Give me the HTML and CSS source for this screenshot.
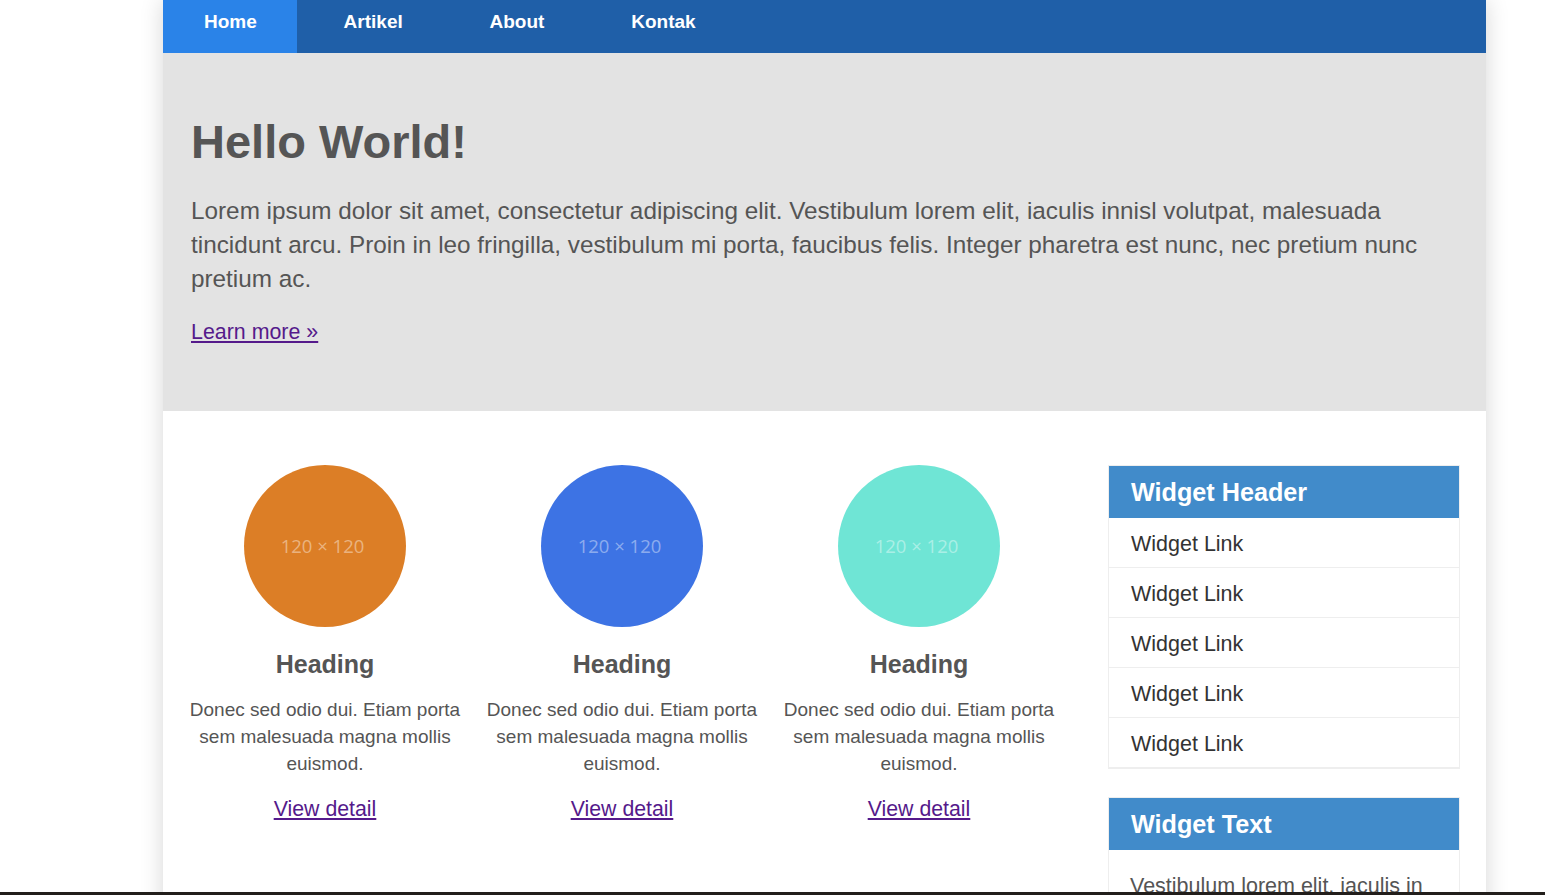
FILE: index.html
```html
<!DOCTYPE html>
<html lang="id">
<head>
<meta charset="utf-8">
<title>Hello World</title>
<link rel="stylesheet" href="styles.css">
</head>
<body>
<div class="page">
  <nav class="nav">
    <a class="nav-item active" href="#">Home</a>
    <a class="nav-item" href="#">Artikel</a>
    <a class="nav-item" href="#">About</a>
    <a class="nav-item" href="#">Kontak</a>
  </nav>
  <header class="hero">
    <h1 class="hero-title">Hello World!</h1>
    <p class="hero-text">Lorem ipsum dolor sit amet, consectetur adipiscing elit. Vestibulum lorem elit, iaculis innisl volutpat, malesuada tincidunt arcu. Proin in leo fringilla, vestibulum mi porta, faucibus felis. Integer pharetra est nunc, nec pretium nunc pretium ac.</p>
    <p class="hero-link"><a href="#">Learn more »</a></p>
  </header>
  <main class="main">
    <section class="cols">
      <div class="col">
        <div class="circle orange"><span>120 × 120</span></div>
        <h2 class="col-title">Heading</h2>
        <p class="col-text">Donec sed odio dui. Etiam porta sem malesuada magna mollis euismod.</p>
        <p class="col-link"><a href="#">View detail</a></p>
      </div>
      <div class="col">
        <div class="circle blue"><span>120 × 120</span></div>
        <h2 class="col-title">Heading</h2>
        <p class="col-text">Donec sed odio dui. Etiam porta sem malesuada magna mollis euismod.</p>
        <p class="col-link"><a href="#">View detail</a></p>
      </div>
      <div class="col">
        <div class="circle teal"><span>120 × 120</span></div>
        <h2 class="col-title">Heading</h2>
        <p class="col-text">Donec sed odio dui. Etiam porta sem malesuada magna mollis euismod.</p>
        <p class="col-link"><a href="#">View detail</a></p>
      </div>
    </section>
    <aside class="aside">
      <div class="widget">
        <h3 class="widget-head">Widget Header</h3>
        <ul class="widget-list">
          <li><a href="#">Widget Link</a></li>
          <li><a href="#">Widget Link</a></li>
          <li><a href="#">Widget Link</a></li>
          <li><a href="#">Widget Link</a></li>
          <li><a href="#">Widget Link</a></li>
        </ul>
      </div>
      <div class="widget widget-second">
        <h3 class="widget-head">Widget Text</h3>
        <p class="widget-body">Vestibulum lorem elit, iaculis in nisl volutpat, malesuada tincidunt arcu.</p>
      </div>
    </aside>
  </main>
</div>
<div class="bottom-bar"></div>
</body>
</html>
```

FILE: styles.css
```css
html, body {
  margin: 0;
  padding: 0;
  background: #ffffff;
  font-family: "Liberation Sans", Arial, sans-serif;
  color: #555555;
}

.page {
  width: 1323px;
  margin-left: 163px;
  background: #ffffff;
  box-shadow: 0 0 22px rgba(0, 0, 0, 0.16);
  min-height: 1000px;
}

.nav {
  display: flex;
  gap: 5.8px;
  height: 53px;
  background: #1f5fa8;
}

.nav-item {
  display: block;
  padding: 0 40px 0 41px;
  height: 53px;
  line-height: 43px;
  font-size: 19px;
  font-weight: bold;
  color: #ffffff;
  text-decoration: none;
}

.nav-item.active {
  background: #2a83e8;
}

.hero {
  background: #e3e3e3;
  padding: 64px 28px 64px 28px;
}

.hero-title {
  margin: 0;
  font-size: 47px;
  line-height: 50.6px;
  font-weight: bold;
  color: #555555;
}

.hero-text {
  margin: 26px 0 0 0;
  font-size: 24.3px;
  line-height: 34px;
  color: #555555;
}

.hero-link {
  margin: 21px 0 0 0;
  font-size: 21.4px;
  line-height: 30px;
}

a {
  color: #551a8b;
}

.main {
  display: flex;
  padding: 54px 26px 0 22px;
}

.cols {
  display: grid;
  grid-template-columns: repeat(3, 280px);
  column-gap: 17px;
  align-items: start;
}

.col {
  display: flex;
  flex-direction: column;
  align-items: center;
  text-align: center;
}

.circle {
  width: 162px;
  height: 162px;
  border-radius: 50%;
  display: flex;
  align-items: center;
  justify-content: center;
}

.circle span {
  font-family: "Open Sans", sans-serif;
  font-size: 18.5px;
  padding-right: 5px;
  color: rgba(255, 255, 255, 0.42);
}

.orange { background: #dc7e26; }
.blue { background: #3d73e4; }
.teal { background: #6fe5d5; }

.col-title {
  margin: 24px 0 0 0;
  font-size: 25px;
  line-height: 27.5px;
  font-weight: bold;
  color: #555555;
}

.col-text {
  margin: 18px 0 0 0;
  font-size: 19px;
  line-height: 27px;
  color: #555555;
}

.col-link {
  margin: 17px 0 0 0;
  font-size: 21.3px;
  line-height: 30px;
}

.aside {
  margin-left: auto;
  width: 352px;
}

.widget {
  border: 1px solid #eeeeee;
  background: #ffffff;
}

.widget-second {
  margin-top: 28px;
}

.widget-head {
  margin: 0;
  height: 52px;
  line-height: 52px;
  padding-left: 22px;
  background: #418bca;
  color: #ffffff;
  font-size: 25.2px;
  font-weight: bold;
}

.widget-list {
  list-style: none;
  margin: 0;
  padding: 0;
}

.widget-list li {
  border-bottom: 1px solid #eeeeee;
  height: 49px;
  line-height: 53px;
  padding-left: 22px;
  font-size: 21.5px;
}

.widget-list a {
  color: #333333;
  text-decoration: none;
}

.widget-body {
  margin: 0;
  padding: 21px 22px 20px 21px;
  font-size: 21.5px;
  line-height: 30px;
  color: #555555;
}

.bottom-bar {
  position: fixed;
  left: 0;
  right: 0;
  bottom: 0;
  height: 3px;
  background: #221e1b;
}
```
